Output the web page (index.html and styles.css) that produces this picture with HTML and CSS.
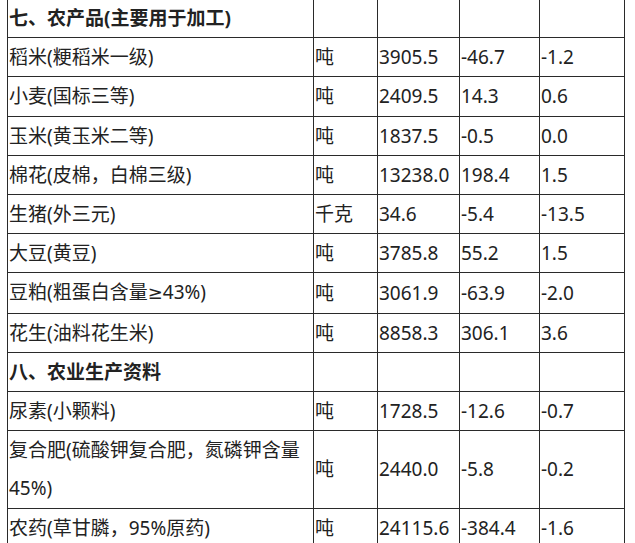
FILE: index.html
```html
<!DOCTYPE html>
<html lang="zh-CN">
<head>
<meta charset="utf-8">
<title>农产品价格表</title>
<link rel="stylesheet" href="styles.css">
</head>
<body>
<table class="price-table">
  <colgroup>
    <col class="c-name">
    <col class="c-unit">
    <col class="c-price">
    <col class="c-diff">
    <col class="c-pct">
  </colgroup>
  <tbody>
    <tr class="section"><td>七、农产品(主要用于加工)</td><td></td><td></td><td></td><td></td></tr>
    <tr><td>稻米(粳稻米一级)</td><td>吨</td><td>3905.5</td><td>-46.7</td><td>-1.2</td></tr>
    <tr><td>小麦(国标三等)</td><td>吨</td><td>2409.5</td><td>14.3</td><td>0.6</td></tr>
    <tr><td>玉米(黄玉米二等)</td><td>吨</td><td>1837.5</td><td>-0.5</td><td>0.0</td></tr>
    <tr><td>棉花(皮棉，白棉三级)</td><td>吨</td><td>13238.0</td><td>198.4</td><td>1.5</td></tr>
    <tr><td>生猪(外三元)</td><td>千克</td><td>34.6</td><td>-5.4</td><td>-13.5</td></tr>
    <tr><td>大豆(黄豆)</td><td>吨</td><td>3785.8</td><td>55.2</td><td>1.5</td></tr>
    <tr><td>豆粕(粗蛋白含量<span class="sym">≥</span>43%)</td><td>吨</td><td>3061.9</td><td>-63.9</td><td>-2.0</td></tr>
    <tr><td>花生(油料花生米)</td><td>吨</td><td>8858.3</td><td>306.1</td><td>3.6</td></tr>
    <tr class="section"><td>八、农业生产资料</td><td></td><td></td><td></td><td></td></tr>
    <tr><td>尿素(小颗料)</td><td>吨</td><td>1728.5</td><td>-12.6</td><td>-0.7</td></tr>
    <tr><td>复合肥(硫酸钾复合肥，氮磷钾含量45%)</td><td>吨</td><td>2440.0</td><td>-5.8</td><td>-0.2</td></tr>
    <tr><td>农药(草甘膦，95%原药)</td><td>吨</td><td>24115.6</td><td>-384.4</td><td>-1.6</td></tr>
  </tbody>
</table>
</body>
</html>
```

FILE: styles.css
```css
html, body {
  margin: 0;
  padding: 0;
  background: #ffffff;
}

body {
  font-family: "Noto Sans", "Noto Sans CJK SC", sans-serif;
  font-size: 19px;
  color: #222222;
}

.price-table {
  margin: -2px 0 0 7px;
  border-collapse: collapse;
  table-layout: fixed;
  width: 618px;
}

.c-name { width: 306px; }
.c-unit { width: 64px; }
.c-price { width: 82px; }
.c-diff { width: 80px; }
.c-pct { width: 85px; }

.price-table td {
  border: 1px solid #2a2a2a;
  padding: 0 0 0 1px;
  line-height: 38.2px;
  height: 38.2px;
  vertical-align: middle;
  text-align: left;
  white-space: normal;
  overflow: hidden;
}

.price-table .section td {
  font-weight: bold;
}

.sym {
  font-family: "DejaVu Sans", sans-serif;
  font-size: 18px;
}
```
